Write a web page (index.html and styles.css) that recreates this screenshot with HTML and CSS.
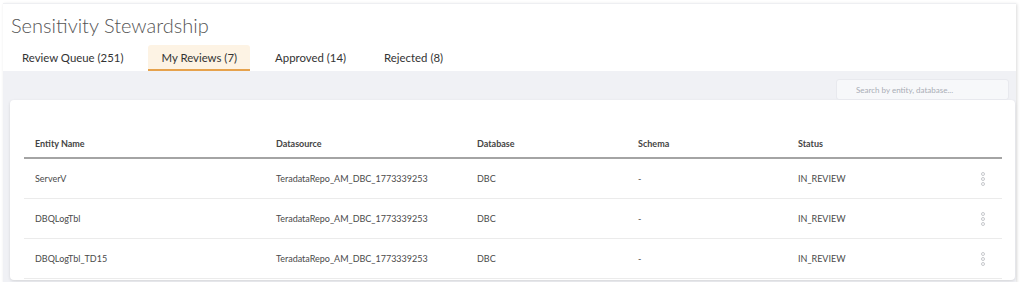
FILE: index.html
```html
<!DOCTYPE html>
<html lang="en">
<head>
  <meta charset="UTF-8">
  <title>Sensitivity Stewardship</title>
  <link rel="stylesheet" href="styles.css">
</head>
<body>

  <div class="frame">
    <div class="header">
      <h1>Sensitivity Stewardship</h1>
      <div class="tabs">
        <div class="tab">Review Queue (251)</div>
        <div class="tab active">My Reviews (7)</div>
        <div class="tab">Approved (14)</div>
        <div class="tab">Rejected (8)</div>
      </div>
    </div>

    <div class="content">
      <div class="toolbar">
        <input type="text" class="search" placeholder="Search by entity, database...">
      </div>

      <div class="card">
        <table>
          <thead>
            <tr>
              <th class="c-name">Entity Name</th>
              <th class="c-src">Datasource</th>
              <th class="c-db">Database</th>
              <th class="c-schema">Schema</th>
              <th class="c-status">Status</th>
              <th class="c-menu"></th>
            </tr>
          </thead>
          <tbody>
            <tr>
              <td>ServerV</td>
              <td>TeradataRepo_AM_DBC_1773339253</td>
              <td>DBC</td>
              <td>-</td>
              <td>IN_REVIEW</td>
              <td class="c-menu"><span class="kebab"><i></i><i></i><i></i></span></td>
            </tr>
            <tr>
              <td>DBQLogTbl</td>
              <td>TeradataRepo_AM_DBC_1773339253</td>
              <td>DBC</td>
              <td>-</td>
              <td>IN_REVIEW</td>
              <td class="c-menu"><span class="kebab"><i></i><i></i><i></i></span></td>
            </tr>
            <tr>
              <td>DBQLogTbl_TD15</td>
              <td>TeradataRepo_AM_DBC_1773339253</td>
              <td>DBC</td>
              <td>-</td>
              <td>IN_REVIEW</td>
              <td class="c-menu"><span class="kebab"><i></i><i></i><i></i></span></td>
            </tr>
          </tbody>
        </table>
      </div>
    </div>
  </div>

</body>
</html>
```

FILE: styles.css
```css
body {
  margin: 0;
  padding: 3px 8px 0 3px;
  background: white;
  font-family: Lato, "Open Sans", sans-serif;
  color: #333;
}

.frame {
  background: #f0f1f5;
  border-top: 1px solid #eeeff2;
  box-shadow: 1px 1px 3px rgba(0,0,0,0.15);
  height: 278px;
}

.header {
  background: white;
  padding: 0 0 0 8px;
}

h1 {
  margin: 0;
  padding-top: 9px;
  height: 32px;
  font-size: 20px;
  font-weight: 300;
  color: #555;
  line-height: 24px;
}

.tabs {
  display: flex;
  height: 26px;
  margin-left: -2px;
}

.tab {
  font-size: 11.4px;
  line-height: 26px;
  padding: 0 13px;
  margin-right: 12px;
  color: #333;
  box-sizing: border-box;
}

.tab.active {
  background: #fdf3e4;
  border-bottom: 2px solid #e6a24c;
  border-radius: 3px 3px 0 0;
  line-height: 25px;
}

.content {
  padding: 8px 1px 0 7px;
}

.toolbar {
  display: flex;
  justify-content: flex-end;
  padding-right: 6px;
}

.search {
  width: 173px;
  height: 21px;
  box-sizing: border-box;
  border: 1px solid #e8e9ee;
  border-radius: 3px;
  background: #f7f8fa;
  font-family: Lato, sans-serif;
  font-size: 8px;
  padding: 0 0 0 19px;
  outline: none;
}

.search::placeholder {
  color: #a9adb6;
}

.card {
  background: white;
  border-radius: 4px;
  box-shadow: 0 1px 3px rgba(0,0,0,0.12);
  padding: 30px 13px 2px 14px;
  height: 148px;
  overflow: hidden;
}

table {
  width: 100%;
  border-collapse: collapse;
  font-size: 9px;
}

th {
  text-align: left;
  font-weight: bold;
  color: #444;
  height: 27px;
  padding: 0 0 0 11px;
  border-bottom: 2px solid #a4a4a4;
}

td {
  height: 39px;
  padding: 0 0 0 11px;
  color: #4a4a4a;
  border-bottom: 1px solid #ebebeb;
}

.c-name { width: 230px; }
.c-src { width: 190px; }
.c-db { width: 150px; }
.c-schema { width: 149px; }
.c-status { width: 172px; }

.c-menu {
  text-align: left;
}

.kebab {
  display: inline-flex;
  flex-direction: column;
  gap: 1px;
  vertical-align: middle;
}

.kebab i {
  display: block;
  width: 2px;
  height: 2px;
  border: 1px solid #c6c8cc;
  border-radius: 50%;
}
```
